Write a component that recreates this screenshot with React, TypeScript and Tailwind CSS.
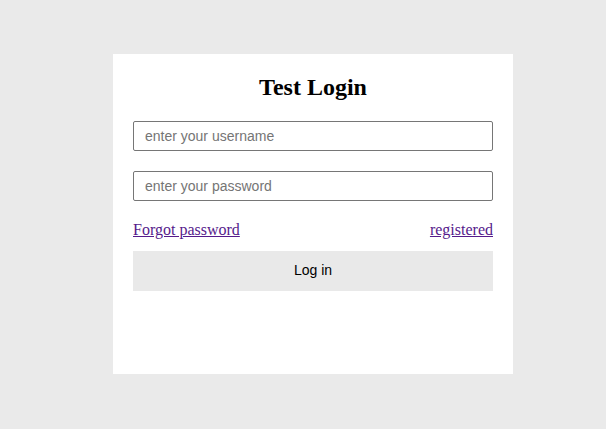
import React from "react";

export default function App() {
  return (
    <div className="w-[606px] h-[429px] bg-[#eaeaea] pt-[54px] pl-[113px]">
      <div className="w-[400px] h-[320px] bg-white px-5 pt-5">
        <h2 className="text-[24px] leading-[24px] font-bold text-center text-black pt-[1px] mb-[22px] [font-family:'Liberation_Serif',serif]">
          Test Login
        </h2>
        <input
          placeholder="enter your username"
          className="block w-[360px] h-[30px] border border-[#767676] rounded-[2px] px-[11px] text-[14px] [font-family:'Liberation_Sans',sans-serif] placeholder:text-[#757575] outline-none"
        />
        <input
          type="password"
          placeholder="enter your password"
          className="block mt-5 w-[360px] h-[30px] border border-[#767676] rounded-[2px] px-[11px] text-[14px] [font-family:'Liberation_Sans',sans-serif] placeholder:text-[#757575] outline-none"
        />
        <div className="mt-5 h-5 flex justify-between items-start text-[16px] leading-[18px] [font-family:'Liberation_Serif',serif] text-[#551a8b]">
          <a href="#" className="underline">Forgot password</a>
          <a href="#" className="underline">registered</a>
        </div>
        <button className="mt-[10px] w-[360px] h-10 pb-[2px] bg-[#e9e9e9] text-black text-[14px] [font-family:'Liberation_Sans',sans-serif]">
          Log in
        </button>
      </div>
    </div>
  );
}
